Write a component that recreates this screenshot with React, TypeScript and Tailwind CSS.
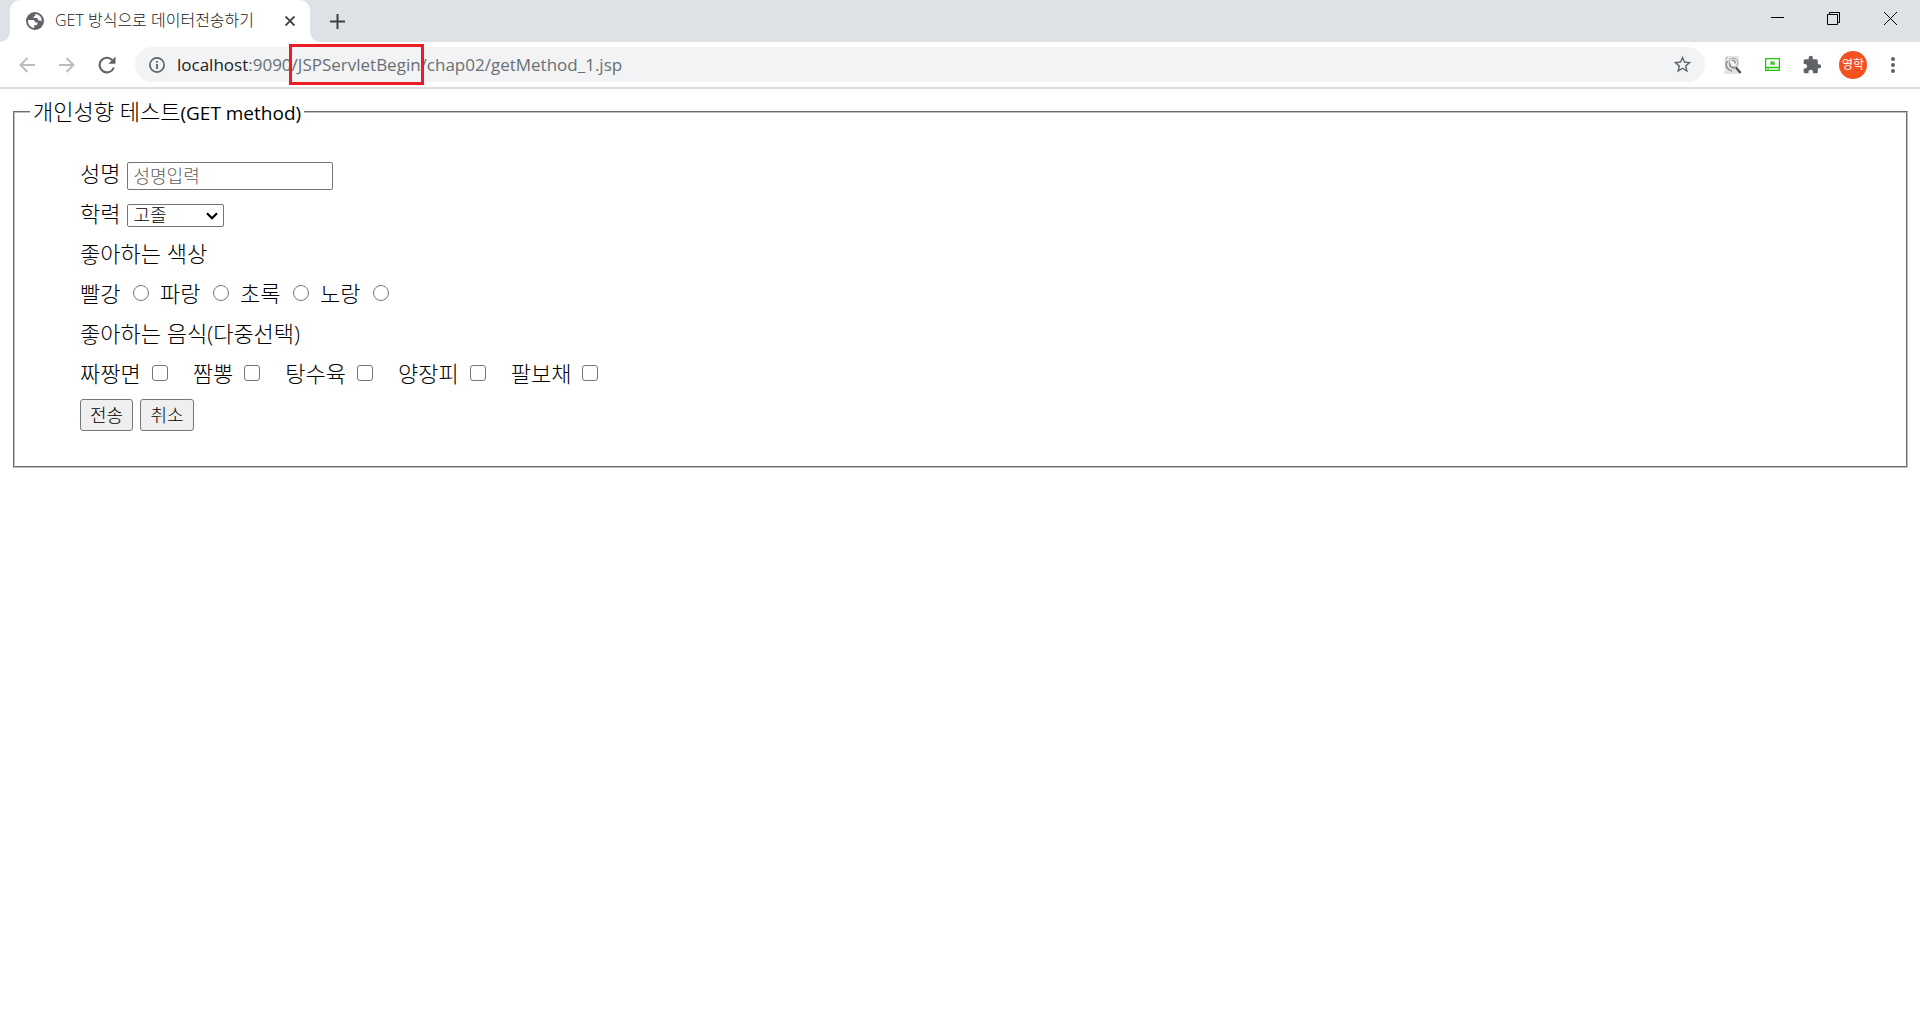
import React from "react";

const colors = ["빨강", "파랑", "초록", "노랑"];
const foods = ["짜짱면", "짬뽕", "탕수육", "양장피", "팔보채"];

function GlobeIcon() {
  return (
    <svg viewBox="0 0 18 18" className="size-[18px] shrink-0">
      <circle cx="9" cy="9" r="9" fill="#5f6368" />
      <path
        d="M2 8h4.500c1.700 0 2.800 1 2.800 2.400h2.200v.8c0 1.300-.9 2.100-2.200 2.100H8.200v2.600C4.700 15.600 2 12.700 2 9z"
        fill="#fff"
      />
      <path
        d="M9.200 2.100v.9c0 .9-.7 1.600-1.600 1.600v1.300h2.900c.8 0 1.400.6 1.400 1.400v1.200h1.500c1 0 1.700.5 2.100 1.300.9-3.800-1.900-7.700-6.300-7.700z"
        fill="#fff"
      />
    </svg>
  );
}

function TitleBar() {
  return (
    <header className="flex h-[42px] bg-[#dee1e6] pl-[10px]">
      <div className="relative flex h-full w-[300px] items-center rounded-t-[10px] bg-white pl-4 pr-3">
        <span className="absolute -left-[10px] bottom-0 size-[10px] bg-white">
          <span className="block size-full rounded-br-[10px] bg-[#dee1e6]" />
        </span>
        <span className="absolute -right-[10px] bottom-0 size-[10px] bg-white">
          <span className="block size-full rounded-bl-[10px] bg-[#dee1e6]" />
        </span>
        <GlobeIcon />
        <span className="ml-[11px] flex-1 whitespace-nowrap pb-[2px] text-[16px] leading-5 text-[#202124]">
          GET 방식으로 데이터전송하기
        </span>
        <button aria-label="탭 닫기" className="flex size-4 items-center justify-center">
          <svg viewBox="0 0 10 10" className="size-[10px]" stroke="#3c4043" strokeWidth="1.900">
            <path d="M.5.5l9 9M9.500.5l-9 9" />
          </svg>
        </button>
      </div>
      <button aria-label="새 탭" className="ml-[18px] flex w-[18px] items-center justify-center">
        <svg viewBox="0 0 15 15" className="size-[15px]" stroke="#3c4043" strokeWidth="2">
          <path d="M7.500 0v15M0 7.500h15" />
        </svg>
      </button>
      <div className="ml-auto flex h-9 text-black">
        <button aria-label="최소화" className="flex w-14 items-center justify-center">
          <svg viewBox="0 0 13 13" className="size-[13px]" stroke="currentColor">
            <path d="M0 5.500h13" />
          </svg>
        </button>
        <button aria-label="이전 크기로 복원" className="flex w-14 items-center justify-center">
          <svg viewBox="0 0 13 13" className="size-[13px]" stroke="currentColor" fill="none">
            <path d="M.5 2.500h10v10H.5zM2.500 2.500v-2h10v10h-2" />
          </svg>
        </button>
        <button aria-label="닫기" className="flex w-[59px] items-center justify-center">
          <svg viewBox="0 0 13 13" className="size-[13px]" stroke="currentColor">
            <path d="M0 0l13 13M13 0L0 13" />
          </svg>
        </button>
      </div>
    </header>
  );
}

function Toolbar() {
  return (
    <nav className="flex h-[47px] items-center border-b-2 border-[#dadce0] pl-[17px] pr-[17px]">
      <button aria-label="뒤로" className="flex size-5 items-center justify-center">
        <svg viewBox="0 0 16 16" className="size-4" stroke="#babcbe" strokeWidth="2" fill="none">
          <path d="M16 8H1.500M8.500 1 1.500 8l7 7" />
        </svg>
      </button>
      <button aria-label="앞으로" className="ml-5 flex size-5 items-center justify-center">
        <svg viewBox="0 0 16 16" className="size-4" stroke="#babcbe" strokeWidth="2" fill="none">
          <path d="M0 8h14.500M7.500 1l7 7-7 7" />
        </svg>
      </button>
      <button aria-label="새로고침" className="ml-5 flex size-5 items-center justify-center">
        <svg viewBox="0 0 18 18" className="size-[18px]">
          <path d="M15.800 11.500A7.300 7.300 0 1 1 14.200 4" fill="none" stroke="#5f6368" strokeWidth="2.100" />
          <path d="M17.500.5v7.200h-7.200z" fill="#5f6368" />
        </svg>
      </button>
      <div className="ml-[18px] flex h-[35px] flex-1 items-center rounded-full bg-[#f1f3f4] pl-[14px] pr-[14px]">
        <svg viewBox="0 0 16 16" className="size-4 shrink-0">
          <circle cx="8" cy="8" r="7.100" fill="none" stroke="#5f6368" strokeWidth="1.700" />
          <path d="M7.100 7h1.800v5H7.100zM7.100 4h1.800v1.800H7.100z" fill="#5f6368" />
        </svg>
        <div className="ml-3 flex-1 whitespace-nowrap text-[17px] font-normal leading-6 text-[#6b6f73]">
          <span className="text-[#202124]">localhost</span>:9090
          <span className="relative">
            /JSPServletBegin
            <span className="absolute -inset-x-[3px] -top-[9px] h-[41px] border-3 border-[#ed1c24]" />
          </span>
          /chap02/getMethod_1.jsp
        </div>
        <button aria-label="북마크" className="flex size-[18px] items-center justify-center">
          <svg viewBox="0 0 24 24" className="size-[21px] shrink-0" fill="#5f6368">
            <path d="M22 9.240l-7.190-.62L12 2 9.190 8.630 2 9.240l5.460 4.730L5.820 21 12 17.270 18.180 21l-1.630-7.030L22 9.240zM12 15.400l-3.760 2.270 1-4.280-3.320-2.880 4.380-.38L12 6.100l1.710 4.040 4.380.38-3.320 2.880 1 4.280L12 15.400z" />
          </svg>
        </button>
      </div>
      <button aria-label="검색 확장 프로그램" className="ml-[19px] size-[18px]">
        <svg viewBox="0 0 18 19" className="size-[18px]" fill="none">
          <path d="M3 0h12v19H0V3z" fill="#e3e3e3" />
          <path d="M3 0v3H0z" fill="#bbb" />
          <circle cx="9.500" cy="7" r="4.500" fill="#f5f5f5" stroke="#aaa" strokeWidth="1.300" />
          <path d="M8 5c2-1 4 1 3 3M3 5c-3 5 0 10 5 11M6 8c-1 3 2 5 5 5" stroke="#888" strokeWidth="1.400" />
          <path d="m12 12 5 6" stroke="#4c4c4c" strokeWidth="2.400" />
        </svg>
      </button>
      <button aria-label="캡처 확장 프로그램" className="ml-[22px] flex h-[18px] w-4 items-center justify-center">
        <svg viewBox="0 0 15 13" className="h-[13px] w-[15px]" fill="none">
          <path d="M.6.6h13.800v11.800H.6zM0 9.500h15" stroke="#1ec800" strokeWidth="1.300" />
          <path d="M5.500 7V3.200h1.400L8.100 5V3.200h1.400V7H8.100L6.900 5.200V7z" fill="#1ec800" />
          <path d="M2.500 10.500h1.500v1H2.500z" fill="#1ec800" />
        </svg>
      </button>
      <button aria-label="확장 프로그램" className="ml-[22px] size-5">
        <svg viewBox="0 0 24 24" className="size-5" fill="#5f6368">
          <path d="M20.500 11H19V7c0-1.100-.9-2-2-2h-4V3.500C13 2.120 11.880 1 10.500 1S8 2.120 8 3.500V5H4c-1.100 0-1.990.9-1.990 2v3.800H3.500c1.490 0 2.700 1.210 2.700 2.700s-1.210 2.700-2.700 2.700H2V20c0 1.100.9 2 2 2h3.800v-1.500c0-1.490 1.210-2.700 2.700-2.700 1.490 0 2.700 1.210 2.700 2.700V22H17c1.100 0 2-.9 2-2v-4h1.500c1.380 0 2.500-1.120 2.500-2.500S21.880 11 20.500 11z" />
        </svg>
      </button>
      <button
        aria-label="프로필 영학"
        className="ml-[17px] flex size-7 items-center justify-center rounded-full bg-[#f4511e] text-[12px] font-normal leading-4 text-white"
      >
        영학
      </button>
      <button aria-label="메뉴" className="ml-4 flex size-5 items-center justify-center">
        <svg viewBox="0 0 4 16" className="h-4 w-1" fill="#5f6368">
          <circle cx="2" cy="2" r="2" />
          <circle cx="2" cy="8" r="2" />
          <circle cx="2" cy="14" r="2" />
        </svg>
      </button>
    </nav>
  );
}

function TestForm() {
  return (
    <form className="pl-[13px] pr-3 pt-2" onSubmit={(e) => e.preventDefault()}>
      <fieldset className="border-2 border-[#c0c0c0] pb-[29px] pl-[65px] pt-[26px] text-[22px] leading-7 text-black [border-style:groove]">
        <legend className="-ml-[50px] px-[3px]">
          개인성향 테스트<span className="text-[19px] font-normal">(GET method)</span>
        </legend>
        <div className="flex h-10 items-center">
          <label htmlFor="name">성명</label>
          <input
            id="name"
            type="text"
            placeholder="성명입력"
            className="ml-[7px] mt-[6px] h-7 w-[206px] rounded-[2px] border border-[#767676] bg-white px-[5px] text-[18px] leading-6 placeholder:text-[#606060]"
          />
        </div>
        <div className="flex h-10 items-center">
          <label htmlFor="school">학력</label>
          <div className="relative ml-[7px] mt-1 flex">
            <select
              id="school"
              className="h-[23px] w-[97px] appearance-none rounded-[2px] border border-[#767676] bg-white pl-[5px] text-[18px] leading-5"
            >
              <option>고졸</option>
              <option>대졸</option>
            </select>
            <svg
              viewBox="0 0 12 8"
              className="pointer-events-none absolute right-[6px] top-2 h-2 w-3"
              fill="none"
              stroke="#000"
              strokeWidth="2.200"
            >
              <path d="M1 1.200l5 5 5-5" />
            </svg>
          </div>
        </div>
        <div className="flex h-10 items-center">좋아하는 색상</div>
        <div className="flex h-10 items-center gap-[11px]">
          {colors.map((c) => (
            <label key={c} className="flex items-center gap-[13px]">
              <span className="w-10 whitespace-nowrap">{c}</span>
              <input
                type="radio"
                name="color"
                className="size-4 appearance-none rounded-full border border-[#767676] bg-white checked:border-4"
              />
            </label>
          ))}
        </div>
        <div className="flex h-10 items-center">좋아하는 음식(다중선택)</div>
        <div className="flex h-10 items-center gap-[25px]">
          {foods.map((f) => (
            <label key={f} className="flex items-center gap-[11px]">
              {f}
              <input
                type="checkbox"
                name="food"
                className="size-4 appearance-none rounded-[3px] border border-[#767676] bg-white checked:bg-[#0075ff]"
              />
            </label>
          ))}
        </div>
        <div className="flex h-11 items-center gap-[7px] text-[18px]">
          <button type="submit" className="h-8 w-[53px] rounded-[3px] border border-[#767676] bg-[#efefef]">
            전송
          </button>
          <button type="reset" className="h-8 w-[54px] rounded-[3px] border border-[#767676] bg-[#efefef]">
            취소
          </button>
        </div>
      </fieldset>
    </form>
  );
}

export default function App() {
  return (
    <div className="min-h-screen bg-white font-light font-['Open_Sans','Noto_Sans_CJK_KR',sans-serif]">
      <TitleBar />
      <Toolbar />
      <main>
        <TestForm />
      </main>
    </div>
  );
}
